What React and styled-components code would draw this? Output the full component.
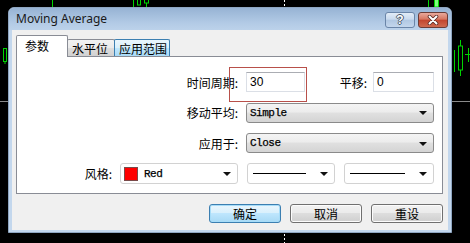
import React from 'react';
import styled, { createGlobalStyle, css } from 'styled-components';

const GlobalStyle = createGlobalStyle`
  html, body {
    margin: 0;
    padding: 0;
    background: #000;
  }
  body {
    width: 470px;
    height: 243px;
    overflow: hidden;
    font-family: "Noto Sans CJK SC", sans-serif;
    font-size: 12px;
    color: #000;
  }
`;

const Desktop = styled.div`
  position: relative;
  width: 470px;
  height: 243px;
  box-sizing: border-box;
  padding: 7px 0 0 8px;
  background: #000;
`;

const Chart = styled.svg`
  position: absolute;
  left: 0;
  top: 0;
  width: 470px;
  height: 243px;
`;

const Window = styled.div`
  position: relative;
  width: 444px;
  height: 226px;
  box-sizing: border-box;
  display: flex;
  flex-direction: column;
  border: 1px solid #8fa6c2;
  border-radius: 6px 6px 0 0;
  background: #c3d7ed;
  box-shadow: inset 0 1px 0 #e8f0f9;
`;

const TitleBar = styled.div`
  height: 22px;
  display: flex;
  align-items: flex-start;
  padding: 0 3px 0 7px;
  border-radius: 5px 5px 0 0;
  background: linear-gradient(#97b3d4, #b3cbe6 70%, #bcd2ea);
`;

const Title = styled.div`
  flex: 1;
  font-family: "Noto Sans", sans-serif;
  font-size: 12px;
  line-height: 22px;
  color: #1a1a1a;
`;

const CaptionButton = styled.div`
  width: 30px;
  height: 16px;
  box-sizing: border-box;
  margin-top: 4px;
  margin-left: 3px;
  border-radius: 3px;
  display: flex;
  align-items: center;
  justify-content: center;
  ${p =>
    p.$close
      ? css`
          border: 1px solid #6b3b36;
          background: linear-gradient(#e9a99c, #d67560 45%, #c2442d 50%, #cf6a50);
        `
      : css`
          border: 1px solid #6a85a8;
          background: linear-gradient(#e2ecf7, #c9daee 45%, #b0c7e2 50%, #c3d6ec);
        `}
`;

const HelpGlyph = styled.span`
  font-family: "Liberation Sans", sans-serif;
  font-weight: bold;
  font-size: 12px;
  line-height: 12px;
  color: #fff;
  text-shadow: -1px 0 #4c5a6b, 1px 0 #4c5a6b, 0 -1px #4c5a6b, 0 1px #4c5a6b;
`;

const Client = styled.div`
  flex: 1;
  margin: 0 3px 2px 3px;
  padding: 5px 0 0 4px;
  background: #f0f0f0;
  display: flex;
  flex-direction: column;
`;

const TabStrip = styled.div`
  display: flex;
  align-items: flex-end;
  height: 22px;
  margin-bottom: -1px;
`;

const Tab = styled.div`
  position: relative;
  box-sizing: border-box;
  width: ${p => p.$w}px;
  border: 1px solid #898c95;
  border-bottom: 0;
  display: flex;
  align-items: center;
  font-size: 12px;
  ${p =>
    p.$active
      ? css`
          height: 22px;
          padding: 0 0 2px 8px;
          background: #fff;
          z-index: 1;
          border-radius: 2px 2px 0 0;
        `
      : css`
          height: 18px;
          margin-left: -1px;
          padding: 0 0 0 4px;
          border-radius: 2px 2px 0 0;
          background: ${p.$hover
            ? 'linear-gradient(#eaf6fd, #d9f0fc 45%, #bee6fd 50%, #a7d9f5)'
            : 'linear-gradient(#f2f2f2, #ebebeb 45%, #dddddd 50%, #cfcfcf)'};
          border-color: ${p.$hover ? '#3c7fb1' : '#898c95'};
        `}
`;

const Panel = styled.div`
  position: relative;
  width: 427px;
  height: 138px;
  box-sizing: border-box;
  border: 1px solid #898c95;
  background: #fff;
  padding: 15px 8px 9px 0;
  display: flex;
  flex-direction: column;
  gap: 10px;
`;

const FormRow = styled.div`
  display: grid;
  grid-template-columns: 1fr 188px;
  column-gap: 8px;
  align-items: center;
  height: ${p => p.$h || 20}px;
`;

const Label = styled.span`
  text-align: right;
  white-space: nowrap;
  font-size: 12px;
`;

const Pair = styled.div`
  display: flex;
  align-items: center;
  height: 100%;
`;

const TextBox = styled.div`
  box-sizing: border-box;
  width: ${p => p.$w}px;
  height: 20px;
  border: 1px solid #dbdfe6;
  border-top-color: #abadb3;
  background: #fff;
  padding-left: 3px;
  font-family: "Liberation Sans", sans-serif;
  font-size: 12px;
  line-height: 18px;
`;

const SideLabel = styled.span`
  margin-left: auto;
  margin-right: 6px;
  font-size: 12px;
`;

const Combo = styled.div`
  box-sizing: border-box;
  width: ${p => p.$w || 188}px;
  height: ${p => p.$h || 20}px;
  display: flex;
  align-items: center;
  padding: 0 6px 0 3px;
  border-radius: 3px;
  ${p =>
    p.$flat
      ? css`
          border: 1px solid #d2d2d2;
          background: #fff;
        `
      : css`
          border: 1px solid #8a8a8a;
          background: linear-gradient(#f4f4f4, #ececec 45%, #e0e0e0 50%, #d4d4d4);
        `}
`;

const ComboText = styled.span`
  flex: 1;
  font-family: "Liberation Mono", monospace;
  font-size: 11px;
  letter-spacing: -0.5px;
  color: #000;
  -webkit-text-stroke: 0.25px #000;
`;

const Arrow = styled.span`
  width: 0;
  height: 0;
  border-left: 4px solid transparent;
  border-right: 4px solid transparent;
  border-top: 4px solid #111;
  margin-top: 1px;
`;

const Swatch = styled.span`
  width: 14px;
  height: 14px;
  box-sizing: border-box;
  margin-right: 6px;
  border: 1px solid #7a4a4a;
  background: #ff0000;
`;

const LineSample = styled.span`
  flex: 1;
  height: 1px;
  margin: 0 14px 0 2px;
  background: #000;
`;

const StyleRow = styled.div`
  display: flex;
  align-items: center;
  justify-content: flex-end;
  gap: 9px;
  height: 21px;
`;

const StyleLabel = styled.span`
  margin-right: -1px;
  font-size: 12px;
`;

const Highlight = styled.div`
  position: absolute;
  left: 212px;
  top: 10px;
  width: 76px;
  height: 33px;
  border: 1px solid #b8504a;
  pointer-events: none;
`;

const ButtonRow = styled.div`
  width: 427px;
  display: flex;
  justify-content: flex-end;
  gap: 9px;
  margin-top: 10px;
`;

const Button = styled.div`
  box-sizing: border-box;
  width: 72px;
  height: 19px;
  border-radius: 3px;
  display: flex;
  align-items: center;
  justify-content: center;
  font-size: 12px;
  ${p =>
    p.$default
      ? css`
          border: 1px solid #3c7fb1;
          background: linear-gradient(#eaf6fd, #d9f0fc 45%, #bee6fd 50%, #a7d9f5);
          box-shadow: inset 0 0 0 1px #a6dcf8;
        `
      : css`
          border: 1px solid #707070;
          background: linear-gradient(#f2f2f2, #ebebeb 45%, #dddddd 50%, #cfcfcf);
          box-shadow: inset 0 0 0 1px #fcfcfc;
        `}
`;

const green = '#00d400';

export default function App() {
  return (
    <Desktop>
      <GlobalStyle />
      <Chart viewBox="0 0 470 243">
        <g stroke={green} strokeWidth="1" fill="none">
          <line x1="52.5" y1="0" x2="52.5" y2="7" />
          <line x1="133.5" y1="0" x2="133.5" y2="7" />
          <rect x="137.5" y="-1" width="3" height="6" />
          <rect x="144.5" y="-1" width="4" height="4" />
          <line x1="146.5" y1="3" x2="146.5" y2="7" />
          <line x1="428.5" y1="0" x2="428.5" y2="7" />
          <rect x="434.5" y="-1" width="4" height="8" fill="#7dff7d" />
          <line x1="454.5" y1="50" x2="454.5" y2="72" />
          <rect x="458.5" y="46" width="4" height="24" />
          <line x1="460.5" y1="40" x2="460.5" y2="46" />
          <line x1="460.5" y1="70" x2="460.5" y2="76" />
          <line x1="465" y1="54.5" x2="470" y2="54.5" />
          <line x1="468.5" y1="48" x2="468.5" y2="62" />
          <rect x="3.5" y="48.5" width="3" height="13" />
          <line x1="5" y1="61" x2="5" y2="64" />
        </g>
        <line x1="0" y1="101.5" x2="8" y2="101.5" stroke="#8a8a8a" />
        <line x1="452" y1="101.5" x2="470" y2="101.5" stroke="#8a8a8a" />
        <line x1="284.5" y1="0" x2="284.5" y2="7" stroke="#fff" strokeDasharray="2 2" />
        <line x1="284.5" y1="234" x2="284.5" y2="243" stroke="#fff" strokeDasharray="2 2" />
      </Chart>

      <Window>
        <TitleBar>
          <Title>Moving Average</Title>
          <CaptionButton>
            <HelpGlyph>?</HelpGlyph>
          </CaptionButton>
          <CaptionButton $close>
            <svg width="12" height="10" viewBox="0 0 12 10">
              <path d="M2.5 1.5 L9.5 8.5 M9.5 1.5 L2.5 8.5" stroke="#5a2a25" strokeWidth="3.6" strokeLinecap="round" />
              <path d="M2.5 1.5 L9.5 8.5 M9.5 1.5 L2.5 8.5" stroke="#fff" strokeWidth="2" strokeLinecap="round" />
            </svg>
          </CaptionButton>
        </TitleBar>

        <Client>
          <TabStrip>
            <Tab $active $w={52}>参数</Tab>
            <Tab $w={48}>水平位</Tab>
            <Tab $hover $w={56}>应用范围</Tab>
          </TabStrip>

          <Panel>
            <FormRow>
              <Label>时间周期:</Label>
              <Pair>
                <TextBox $w={59}>30</TextBox>
                <SideLabel>平移:</SideLabel>
                <TextBox $w={61}>0</TextBox>
              </Pair>
            </FormRow>
            <FormRow $h={21}>
              <Label>移动平均:</Label>
              <Combo>
                <ComboText>Simple</ComboText>
                <Arrow />
              </Combo>
            </FormRow>
            <FormRow>
              <Label>应用于:</Label>
              <Combo>
                <ComboText>Close</ComboText>
                <Arrow />
              </Combo>
            </FormRow>
            <StyleRow>
              <StyleLabel>风格:</StyleLabel>
              <Combo $flat $w={118} $h={21}>
                <Swatch />
                <ComboText>Red</ComboText>
                <Arrow />
              </Combo>
              <Combo $flat $w={88} $h={21}>
                <LineSample />
                <Arrow />
              </Combo>
              <Combo $flat $w={90} $h={21}>
                <LineSample />
                <Arrow />
              </Combo>
            </StyleRow>
            <Highlight />
          </Panel>

          <ButtonRow>
            <Button $default>确定</Button>
            <Button>取消</Button>
            <Button>重设</Button>
          </ButtonRow>
        </Client>
      </Window>
    </Desktop>
  );
}
